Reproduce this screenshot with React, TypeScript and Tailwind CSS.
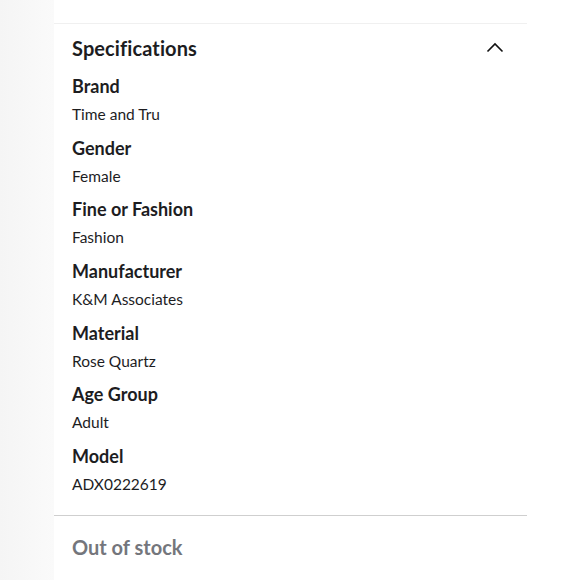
const specs = [
  { label: 'Brand', value: 'Time and Tru' },
  { label: 'Gender', value: 'Female' },
  { label: 'Fine or Fashion', value: 'Fashion' },
  { label: 'Manufacturer', value: 'K&M Associates' },
  { label: 'Material', value: 'Rose Quartz' },
  { label: 'Age Group', value: 'Adult' },
  { label: 'Model', value: 'ADX0222619' },
]

export default function App() {
  return (
    <div className="flex h-[580px] w-[580px] overflow-hidden bg-white font-['Lato','Open_Sans',sans-serif] text-[#1d1d1f]">
      <div className="w-[54px] shrink-0 bg-gradient-to-r from-[#f5f5f5] to-[#fafafa]" />
      <div className="w-[473px] shrink-0">
        <div className="h-[23px]" />
        <div className="border-t border-[#f0f0f0]">
          <div className="flex items-center justify-between pl-[18px] pr-[22px] pt-[11px]">
            <h2 className="text-[20px] font-bold leading-[26px] tracking-[0.1px]">Specifications</h2>
            <svg width="20" height="20" viewBox="0 0 20 20" fill="none" stroke="#111" strokeWidth="1.6">
              <path d="M2.5 13.5 10 6l7.5 7.5" />
            </svg>
          </div>
          <dl className="pl-[18px] pt-[10px] pb-[12px]">
            {specs.map((s) => (
              <div key={s.label} className="h-[61.7px]">
                <dt className="text-[18px] font-bold leading-[30px]">{s.label}</dt>
                <dd className="text-[15.5px] leading-[26px]">{s.value}</dd>
              </div>
            ))}
          </dl>
        </div>
        <div className="border-t border-[#cfcfcf] pl-[18px] pt-[18px]">
          <p className="text-[20px] font-bold leading-[26px] text-[#74767c]">Out of stock</p>
        </div>
      </div>
      <div className="flex-1" />
    </div>
  )
}
